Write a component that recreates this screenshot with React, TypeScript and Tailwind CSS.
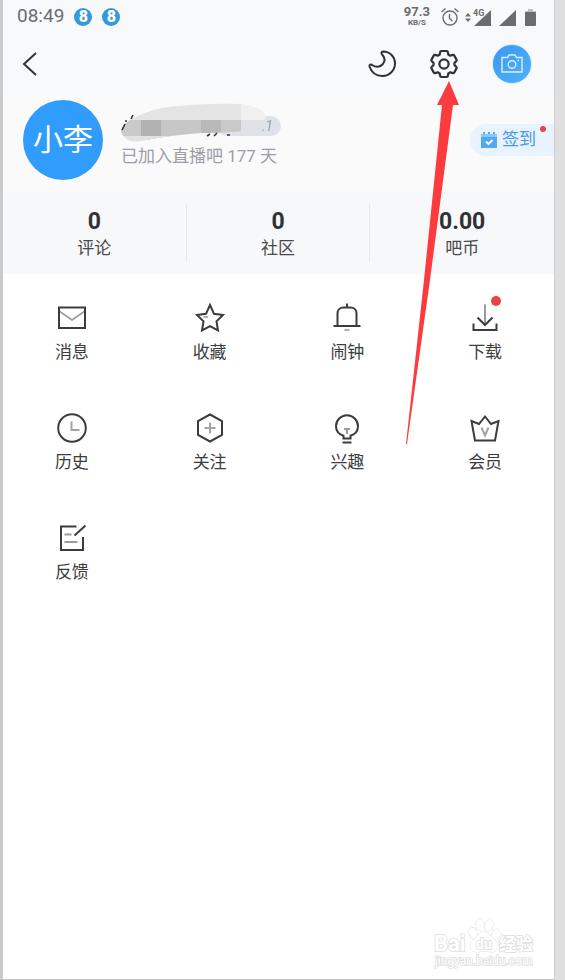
import type { ReactNode } from 'react';

const stats = [
  { value: '0', label: '评论' },
  { value: '0', label: '社区' },
  { value: '0.00', label: '吧币' },
];

const menu: { label: string; dot?: boolean; icon: ReactNode }[] = [
  {
    label: '消息',
    icon: (
      <>
        <path d="M3 9l13 9 13-9" stroke="#9a9a9f" strokeWidth="1.6" />
        <rect x="3" y="5.5" width="26" height="20.5" />
      </>
    ),
  },
  {
    label: '收藏',
    icon: (
      <>
        <path d="M16 3l4 8.800 9 1.200-6.500 6.400 1.500 9.100-8-4.300-8 4.300 1.500-9.100L3 13l9-1.200z" />
        <path d="M9.500 15h4.500" stroke="#9a9a9f" strokeWidth="1.6" />
      </>
    ),
  },
  {
    label: '闹钟',
    icon: (
      <>
        <path d="M16 1.500v4M6.500 24V11.500C6.500 8 9 5.500 12.500 5.500h7c3.500 0 6 2.500 6 6V24M2.500 24h27" />
        <path d="M13.500 28h5" stroke="#9a9a9f" strokeWidth="1.6" />
      </>
    ),
  },
  {
    label: '下载',
    dot: true,
    icon: (
      <>
        <path d="M16 2.500V22" stroke="#9a9a9f" />
        <path d="M8.500 15.500L16 23l7.500-7.500M4.500 21.500V28h23v-6.500" />
      </>
    ),
  },
  {
    label: '历史',
    icon: (
      <>
        <circle cx="16" cy="16" r="13.8" />
        <path d="M15.500 9.500v8.500h8" stroke="#a2a2a8" />
      </>
    ),
  },
  {
    label: '关注',
    icon: (
      <>
        <path d="M16 2.500l12 6.500v14l-12 6.500L4 23V9z" />
        <path d="M16 10.500v11M10.500 16h11" stroke="#a2a2a8" />
      </>
    ),
  },
  {
    label: '兴趣',
    icon: (
      <>
        <path d="M12.500 26.500v-2.700C8 22.300 5 18.600 5 14.300a11 11 0 0 1 22 0c0 4.300-3 8-7.500 9.500v2.700zM11.500 30.500h9" />
        <path d="M13 17h6M16 17v5" stroke="#9a9a9f" />
      </>
    ),
  },
  {
    label: '会员',
    icon: (
      <>
        <path d="M2.500 9l7.500 3 6-7.500 6 7.500 7.500-3-3.500 19.500H6z" />
        <path d="M12.500 15.500l3.500 8 3.500-8" stroke="#a2a2a8" />
      </>
    ),
  },
  {
    label: '反馈',
    icon: (
      <>
        <path d="M20.500 4.500H5V28h22V15M18.500 13.500l11-10" />
        <path d="M8.500 12.500h7M8.500 20h13" stroke="#9a9a9f" />
      </>
    ),
  },
];

function StatusBar() {
  return (
    <div className="flex h-8 items-center justify-between pl-3.5 pr-4 pt-px text-[#6b6c6e]">
      <div className="flex items-center gap-2.5">
        <span className="text-[19px]">08:49</span>
        {[0, 1].map((i) => (
          <span key={i} className="flex h-4.5 w-4.5 items-center justify-center rounded-full bg-[#3498dc] text-base font-black text-white">
            8
          </span>
        ))}
      </div>
      <div className="flex items-center">
        <div className="flex flex-col items-center font-bold">
          <span className="text-[13px] leading-3">97.3</span>
          <span className="text-[8px] leading-[10px]">KB/S</span>
        </div>
        <svg className="ml-2.5 h-5 w-5" viewBox="0 0 20 20" fill="none" stroke="currentColor" strokeWidth="1.4">
          <circle cx="10" cy="11" r="7" />
          <path d="M9.500 7v4.500l3 2.500M1.500 5l4-3.500M18.500 5l-4-3.500" />
        </svg>
        <svg className="ml-1 h-5 w-7" viewBox="0 0 28 20" fill="currentColor">
          <path d="M4 6l3 3.500H1zM4 15l3-3.500H1zM27 3v16H10z" />
          <text x="9" y="9" fontSize="9" fontWeight="700" stroke="#f7f9fb" strokeWidth="2" paintOrder="stroke">4G</text>
        </svg>
        <svg className="ml-1.5 h-5 w-4.5" viewBox="0 0 18 20" fill="currentColor">
          <path d="M18 3v16H1z" />
        </svg>
        <svg className="ml-2 h-5 w-3.5" viewBox="0 0 14 20" fill="currentColor">
          <path d="M4 2h5v2h3v3H1V4h3z" opacity=".4" />
          <rect x="1" y="5" width="11" height="14" rx="1" />
        </svg>
      </div>
    </div>
  );
}

function TopNav() {
  return (
    <nav className="flex h-16 items-center justify-between pl-4 pr-5.5">
      <button aria-label="返回" className="flex h-8 w-6 items-center justify-center">
        <svg className="h-7 w-6" viewBox="0 0 24 28" fill="none" stroke="#333" strokeWidth="2">
          <path d="M17 3L5 14l12 11" />
        </svg>
      </button>
      <div className="flex items-center">
        <button aria-label="夜间模式">
          <svg className="h-8 w-8" viewBox="0 0 32 32" fill="none" stroke="#303134" strokeWidth="2" strokeLinejoin="round">
            <path d="M17 3.500C24 3.500 29 9 29 15.500S23.500 28 16.500 28C10.500 28 5.500 24.500 3.500 18.500c-.5-2 1.500-2.500 3-1.200 3.200 2.200 7.500 2 10-.8s2.500-6.500 0-9.500c-1.500-1.500-1.500-3 .5-3.500z" />
          </svg>
        </button>
        <button aria-label="设置" className="ml-7.5">
          <svg className="h-8 w-8" viewBox="0 0 32 32" fill="none" stroke="#303134" strokeWidth="2.2" strokeLinejoin="round">
            <path d="M13.500 3h5q1.200 0 1.400 1.200l.4 2.300 2 1.200 2.400-.8q1-.3 1.600.7l2.200 4q.5 1-.3 1.600L26.500 14.800v2.400l1.700 1.600q.8.600.3 1.600l-2.200 4q-.6 1-1.600.7l-2.400-.8-2 1.200-.4 2.300Q19.700 29 18.500 29h-5q-1.200 0-1.400-1.200l-.4-2.300-2-1.200-2.400.8q-1 .3-1.600-.7l-2.200-4q-.5-1 .3-1.600l1.700-1.600v-2.400l-1.700-1.600q-.8-.6-.3-1.600l2.200-4q.6-1 1.600-.7l2.400.8 2-1.200.4-2.300Q12.300 3 13.500 3z" />
            <circle cx="16" cy="16" r="4.6" />
          </svg>
        </button>
        <button aria-label="拍照" className="ml-8 flex h-10 w-10 items-center justify-center rounded-full border border-[#d3eafd] bg-linear-to-br from-[#3a98f0] to-[#51b0fa]">
          <svg className="h-6 w-6" viewBox="0 0 24 24" fill="none" stroke="#d5f2ff" strokeWidth="1.4">
            <path d="M2 5.500h5.500l1.500-2.500h6l1.500 2.500H22V20H2zM17.500 8.500H19" />
            <circle cx="12" cy="12.500" r="3.8" />
          </svg>
        </button>
      </div>
    </nav>
  );
}

function Profile() {
  return (
    <section className="flex h-24 items-start bg-[#fafafb] pl-5 pt-1">
      <div className="flex h-20 w-20 shrink-0 items-center justify-center rounded-full bg-[#309cfc] text-3xl text-white">
        小李
      </div>
      <div className="ml-4.5 flex-1 pt-2">
        <div className="relative h-9 w-41">
          <span className="absolute right-1 top-2 flex h-5 w-16 items-center justify-end rounded-full bg-[#dfe2e9] pr-2 text-sm italic text-[#a0a3b2]">.1</span>
          <svg className="absolute left-0 top-0 h-10 w-40" viewBox="0 0 160 40" overflow="visible">
            <clipPath id="smudge">
              <path d="M0 23Q2 10 40 0Q80-5 120-4Q140-1 145 8L141 20Q120 25 80 25Q50 27 25 32Q4 37 0 23z" />
            </clipPath>
            <g clipPath="url(#smudge)">
              <path d="M0-8h160v48H0z" fill="#e4e4e5" />
              <path d="M0 12h20v16H0z" fill="#cacaca" />
              <path d="M20 12h20v20H20z" fill="#b2b2b2" />
              <path d="M40 12h40v20H40z" fill="#c7c7c8" />
              <path d="M80 12h20v20H80z" fill="#b9b9b9" />
              <path d="M100 12h20v20h-20z" fill="#c9c9c9" />
              <path d="M120-8h30v20h-30z" fill="#f0f0f1" />
              <path d="M120 12h30v20h-30z" fill="#dfe1e5" />
              <path d="M0 28h160v10H0z" fill="#e2e2e2" />
            </g>
            <path d="M1 22l3-6M4 13h2M10 11l2-4M86 28l3-2M93 28l3-3M106 27h3" stroke="#333" strokeWidth="1.6" />
          </svg>
        </div>
        <p className="whitespace-nowrap text-[17px] leading-6 text-[#9c9da9]">已加入直播吧 177 天</p>
      </div>
      <button className="relative mt-6 flex h-8 items-center gap-1 rounded-l-full bg-[#e9f3fd] pl-2.5 pr-4.5 text-[17px] text-[#459be8]">
        <svg className="h-4.5 w-4.5" viewBox="0 0 18 18">
          <path d="M1 3h2V1h2v2h3V1h2v2h3V1h2v2h2v14H1z" fill="#53a8f2" />
          <path d="M1 3h16v3H1z" fill="#8bc8f8" />
          <path d="M6 10.500l2.500 2.500 4-4" fill="none" stroke="#fff" strokeWidth="1.8" />
        </svg>
        签到
        <span className="absolute right-2 top-0.5 h-1.5 w-1.5 rounded-full bg-[#e34448]" />
      </button>
    </section>
  );
}

function Watermark() {
  return (
    <svg className="h-13 w-27" viewBox="0 0 108 52" fill="#fff" stroke="#dedede" strokeWidth="1.6" paintOrder="stroke">
      <text x="4" y="34" fontSize="22" fontWeight="700">Bai</text>
      <g strokeWidth="1">
        <ellipse cx="43" cy="16" rx="4" ry="5.5" transform="rotate(-15 43 16)" />
        <ellipse cx="50" cy="7.500" rx="4" ry="5.5" />
        <ellipse cx="59" cy="8.500" rx="4" ry="5.5" transform="rotate(12 59 8.500)" />
        <ellipse cx="66" cy="17" rx="4" ry="5" transform="rotate(20 66 17)" />
        <path d="M54 15c5 0 7 5 11 8 5 4 3 12-3 12-3 0-5-1-8-1s-5 1-8 1c-6 0-8-8-3-12 4-3 6-8 11-8z" />
      </g>
      <text x="46" y="32" fontSize="14" fontWeight="700">du</text>
      <text x="69" y="33" fontSize="17" fontWeight="700">经验</text>
      <text x="5" y="48" fontSize="12">jingyan.baidu.com</text>
    </svg>
  );
}

export default function App() {
  return (
    <div className="min-h-screen bg-[#dfdfdf] font-[Roboto,'Noto_Sans_CJK_SC',sans-serif]">
      <div className="relative mr-2.5 flex min-h-screen flex-col border-b border-l-3 border-r border-b-[#c4c4c4] border-l-[#cacaca] border-r-[#cecece] bg-white">
        <header className="bg-[#f7f9fb]">
          <StatusBar />
          <TopNav />
        </header>
        <Profile />

        <section className="grid grid-cols-3 divide-x divide-[#e7e9ec] bg-[#f7f8fa] py-3">
          {stats.map((s) => (
            <div key={s.label} className="flex flex-col items-center pt-1.5">
              <span className="text-[23px] font-bold leading-6 text-[#303134]">{s.value}</span>
              <span className="text-[17px] leading-7 text-[#47484b]">{s.label}</span>
            </div>
          ))}
        </section>

        <main className="grid grid-cols-4 gap-y-10 pt-7">
          {menu.map((m) => (
            <button key={m.label} className="flex h-17.5 flex-col items-center">
              <span className="relative">
                <svg className="h-8 w-8" viewBox="0 0 32 32" fill="none" stroke="#3c3c3e" strokeWidth="2">
                  {m.icon}
                </svg>
                {m.dot && <span className="absolute right-0 -top-1.5 h-2.5 w-2.5 rounded-full bg-[#e84343]" />}
              </span>
              <span className="mt-1.5 text-[17px] leading-6 text-[#3c3c3e]">{m.label}</span>
            </button>
          ))}
        </main>

        <footer className="mt-auto flex justify-end pb-2.5 pr-4">
          <Watermark />
        </footer>

        {/* pointer to the settings gear */}
        <svg className="pointer-events-none absolute right-22 top-20 h-91 w-15" viewBox="0 0 60 364" fill="#fb3b3d">
          <path d="M43 1L53 25H47L24 200 1 364H0L18 200 36 25H31z" />
        </svg>
      </div>
    </div>
  );
}
